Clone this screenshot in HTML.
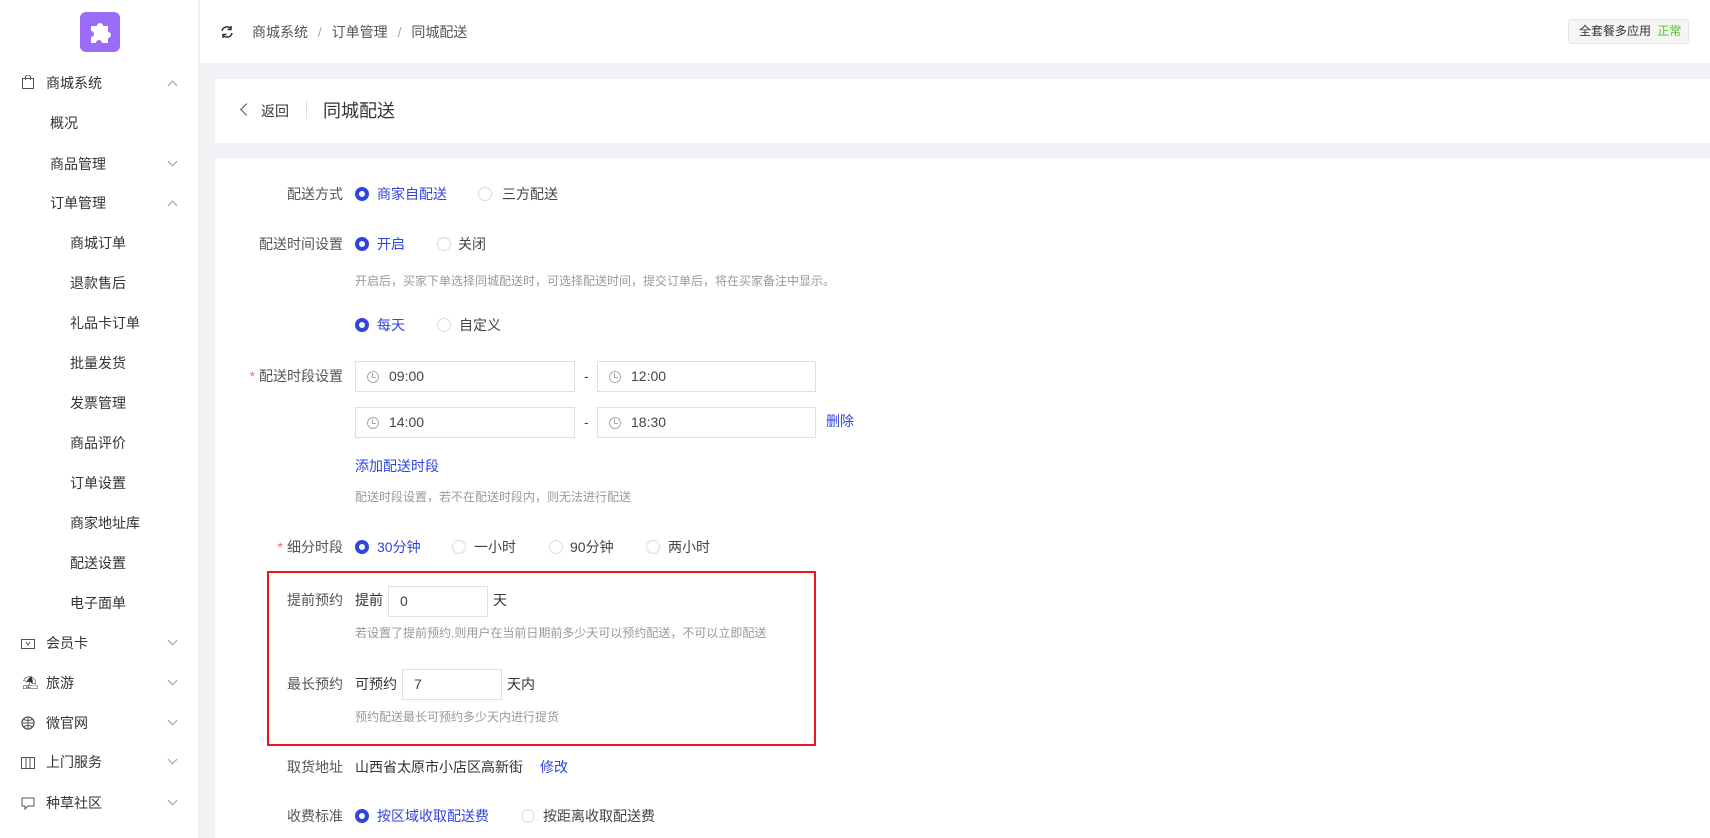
<!DOCTYPE html>
<html><head><meta charset="utf-8"><style>
*{margin:0;padding:0;box-sizing:border-box}
body{width:1710px;height:838px;overflow:hidden;background:#f0f2f5;font-family:"Liberation Sans","Noto Sans CJK SC",sans-serif;color:#333;font-size:14px;position:relative}
.a{position:absolute;white-space:nowrap}
.side{position:absolute;left:0;top:0;width:199px;height:838px;background:#fff;border-right:1px solid #e8eaee}
.mi{position:absolute;font-size:14px;color:#333;line-height:20px}
.arr{position:absolute;left:169px;width:7px;height:7px;border-left:1px solid #999;border-top:1px solid #999}
.up{transform:rotate(45deg)}
.dn{transform:rotate(225deg)}
.lab{position:absolute;right:calc(1710px - 343px);font-size:14px;color:#555;line-height:20px;white-space:nowrap;text-align:right}
.star{color:#f56c6c;margin-right:4px}
.r{position:absolute;width:14px;height:14px;border-radius:50%;border:1px solid #d8dbe3;background:#fff}
.r.on{border:4px solid #3045e0}
.t{position:absolute;line-height:20px;font-size:14px;white-space:nowrap;color:#444}
.t.on{color:#3045e0}
.hint{position:absolute;font-size:12px;color:#999;line-height:18px;white-space:nowrap}
.inp{position:absolute;border:1px solid #dcdfe6;background:#fff;height:31px;font-size:14px;color:#444;line-height:29px}
.clk{position:absolute;left:11px;top:9px;width:12px;height:12px;border:1px solid #aaa;border-radius:50%}
.clk:after{content:"";position:absolute;left:4px;top:1px;width:3px;height:4px;border-left:1px solid #aaa;border-bottom:1px solid #aaa}
.link{color:#3045e0}
</style></head><body>
<div class="side">
 <div class="a" style="left:80px;top:12px;width:40px;height:40px;border-radius:6px;background:#9b6cf7">
  <svg width="40" height="40" viewBox="0 0 40 40"><path d="M11 14h6a3 3 0 1 1 6 0h5v6a3 3 0 1 1 0 6v5h-6a3 3 0 1 0-6 0h-5v-6a3 3 0 1 0 0-6z" fill="#fff"/></svg>
 </div>
 <svg class="a" style="left:22px;top:75px" width="12" height="14" viewBox="0 0 12 14"><rect x="0.5" y="3.5" width="11" height="10" fill="none" stroke="#555"/><path d="M3.5 5V2a2.5 2 0 0 1 5 0v3" fill="none" stroke="#555"/></svg>
 <div class="mi" style="left:46px;top:73px">商城系统</div><div class="arr up" style="top:82px"></div>
 <div class="mi" style="left:50px;top:113px">概况</div>
 <div class="mi" style="left:50px;top:154px">商品管理</div><div class="arr dn" style="top:158px"></div>
 <div class="mi" style="left:50px;top:193px">订单管理</div><div class="arr up" style="top:202px"></div>
 <div class="mi" style="left:70px;top:233px">商城订单</div>
 <div class="mi" style="left:70px;top:273px">退款售后</div>
 <div class="mi" style="left:70px;top:313px">礼品卡订单</div>
 <div class="mi" style="left:70px;top:353px">批量发货</div>
 <div class="mi" style="left:70px;top:393px">发票管理</div>
 <div class="mi" style="left:70px;top:433px">商品评价</div>
 <div class="mi" style="left:70px;top:473px">订单设置</div>
 <div class="mi" style="left:70px;top:513px">商家地址库</div>
 <div class="mi" style="left:70px;top:553px">配送设置</div>
 <div class="mi" style="left:70px;top:593px">电子面单</div>
 <svg class="a" style="left:21px;top:637px" width="14" height="12"><rect x="0.5" y="2.5" width="13" height="9" fill="none" stroke="#555"/><path d="M5 5l2 3 2-3" fill="none" stroke="#555"/></svg>
 <div class="mi" style="left:46px;top:633px">会员卡</div><div class="arr dn" style="top:637px"></div>
 <div class="mi" style="left:22px;top:673px;font-size:13px">⛱</div>
 <div class="mi" style="left:46px;top:673px">旅游</div><div class="arr dn" style="top:677px"></div>
 <svg class="a" style="left:21px;top:716px" width="14" height="14"><circle cx="7" cy="7" r="6" fill="none" stroke="#555" stroke-width="1.3"/><path d="M1 7h12M7 1v12M3 3.5q4 2 8 0M3 10.5q4-2 8 0" fill="none" stroke="#555"/></svg>
 <div class="mi" style="left:46px;top:713px">微官网</div><div class="arr dn" style="top:717px"></div>
 <svg class="a" style="left:21px;top:756px" width="14" height="14"><rect x="0.5" y="1.5" width="13" height="11" fill="none" stroke="#555"/><path d="M5 2v10M9 2v10" stroke="#555"/></svg>
 <div class="mi" style="left:46px;top:752px">上门服务</div><div class="arr dn" style="top:756px"></div>
 <svg class="a" style="left:21px;top:797px" width="14" height="13"><path d="M1 1h12v8H7l-3 3V9H1z" fill="none" stroke="#555"/></svg>
 <div class="mi" style="left:46px;top:793px">种草社区</div><div class="arr dn" style="top:797px"></div>
</div>
<!-- header -->
<div class="a" style="left:200px;top:0;width:1510px;height:63px;background:#fff"></div>
<svg class="a" style="left:220px;top:25px" width="14" height="14" viewBox="0 0 14 14"><path d="M2 6a5 5 0 0 1 9-2M12 8a5 5 0 0 1-9 2" fill="none" stroke="#333" stroke-width="1.5"/><path d="M11 1v3.5H7.5M3 13V9.5h3.5" fill="none" stroke="#333" stroke-width="1.5"/></svg>
<div class="a" style="left:252px;top:23px;font-size:14px;color:#555;line-height:18px">商城系统 <span style="color:#aaa;margin:0 6px">/</span> 订单管理 <span style="color:#aaa;margin:0 6px">/</span> 同城配送</div>
<div class="a" style="left:1568px;top:19px;width:121px;height:25px;border:1px solid #e6e6e6;border-radius:3px;background:#f5f5f5;font-size:12px;line-height:23px;padding-left:10px;color:#333">全套餐多应用 <span style="color:#52c41a;margin-left:3px">正常</span></div>
<!-- card2 -->
<div class="a" style="left:215px;top:79px;width:1495px;height:64px;background:#fff"></div>
<div class="a" style="left:242px;top:105px;width:9px;height:9px;border-left:1.5px solid #555;border-bottom:1.5px solid #555;transform:rotate(45deg)"></div>
<div class="a" style="left:261px;top:101px;font-size:14px;line-height:20px">返回</div>
<div class="a" style="left:306px;top:101px;width:1px;height:18px;background:#ddd"></div>
<div class="a" style="left:323px;top:98px;font-size:18px;line-height:26px">同城配送</div>
<!-- main -->
<div class="a" style="left:215px;top:158px;width:1495px;height:680px;background:#fff"></div>

<div class="lab" style="top:184px">配送方式</div>
<div class="r on" style="left:355px;top:187px"></div><div class="t on" style="left:377px;top:184px">商家自配送</div>
<div class="r" style="left:478px;top:187px"></div><div class="t" style="left:502px;top:184px">三方配送</div>

<div class="lab" style="top:234px">配送时间设置</div>
<div class="r on" style="left:355px;top:237px"></div><div class="t on" style="left:377px;top:234px">开启</div>
<div class="r" style="left:437px;top:237px"></div><div class="t" style="left:458px;top:234px">关闭</div>
<div class="hint" style="left:355px;top:272px">开启后，买家下单选择同城配送时，可选择配送时间，提交订单后，将在买家备注中显示。</div>

<div class="r on" style="left:355px;top:318px"></div><div class="t on" style="left:377px;top:315px">每天</div>
<div class="r" style="left:437px;top:318px"></div><div class="t" style="left:459px;top:315px">自定义</div>

<div class="lab" style="top:366px"><span class="star">*</span>配送时段设置</div>
<div class="inp" style="left:355px;top:361px;width:220px"><div class="clk"></div><span style="position:absolute;left:33px">09:00</span></div>
<div class="t" style="left:584px;top:366px">-</div>
<div class="inp" style="left:597px;top:361px;width:219px"><div class="clk"></div><span style="position:absolute;left:33px">12:00</span></div>
<div class="inp" style="left:355px;top:407px;width:220px"><div class="clk"></div><span style="position:absolute;left:33px">14:00</span></div>
<div class="t" style="left:584px;top:412px">-</div>
<div class="inp" style="left:597px;top:407px;width:219px"><div class="clk"></div><span style="position:absolute;left:33px">18:30</span></div>
<div class="t on" style="left:826px;top:411px">删除</div>
<div class="t on" style="left:355px;top:456px">添加配送时段</div>
<div class="hint" style="left:355px;top:488px">配送时段设置，若不在配送时段内，则无法进行配送</div>

<div class="lab" style="top:537px"><span class="star">*</span>细分时段</div>
<div class="r on" style="left:355px;top:540px"></div><div class="t on" style="left:377px;top:537px">30分钟</div>
<div class="r" style="left:452px;top:540px"></div><div class="t" style="left:474px;top:537px">一小时</div>
<div class="r" style="left:549px;top:540px"></div><div class="t" style="left:570px;top:537px">90分钟</div>
<div class="r" style="left:646px;top:540px"></div><div class="t" style="left:668px;top:537px">两小时</div>

<div class="a" style="left:267px;top:571px;width:549px;height:175px;border:2px solid #f0141e"></div>
<div class="lab" style="top:590px">提前预约</div>
<div class="t" style="left:355px;top:590px;color:#333">提前</div>
<div class="inp" style="left:388px;top:586px;width:100px;padding-left:11px">0</div>
<div class="t" style="left:493px;top:590px;color:#333">天</div>
<div class="hint" style="left:355px;top:624px">若设置了提前预约,则用户在当前日期前多少天可以预约配送，不可以立即配送</div>
<div class="lab" style="top:674px">最长预约</div>
<div class="t" style="left:355px;top:674px;color:#333">可预约</div>
<div class="inp" style="left:402px;top:669px;width:100px;padding-left:11px">7</div>
<div class="t" style="left:507px;top:674px;color:#333">天内</div>
<div class="hint" style="left:355px;top:708px">预约配送最长可预约多少天内进行提货</div>

<div class="lab" style="top:757px">取货地址</div>
<div class="t" style="left:355px;top:757px;color:#333">山西省太原市小店区高新街</div>
<div class="t on" style="left:540px;top:757px">修改</div>

<div class="lab" style="top:806px">收费标准</div>
<div class="r on" style="left:355px;top:809px"></div><div class="t on" style="left:377px;top:806px">按区域收取配送费</div>
<div class="r" style="left:521px;top:809px"></div><div class="t" style="left:543px;top:806px">按距离收取配送费</div>
</body></html>
